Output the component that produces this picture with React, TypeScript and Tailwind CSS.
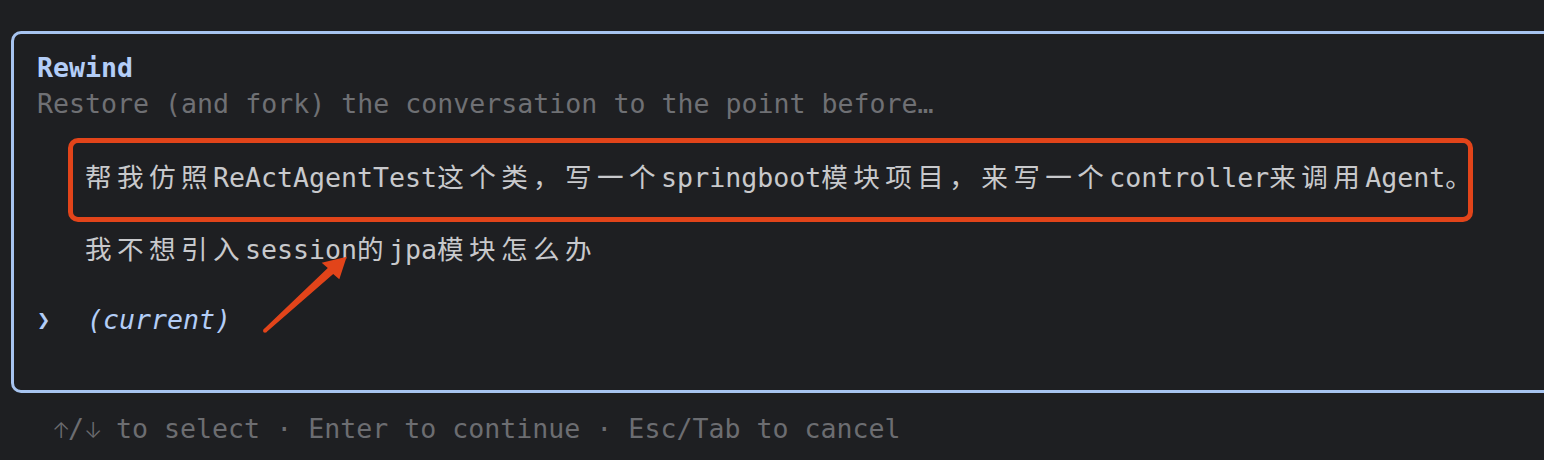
import React from "react";

const CJK = /([\u3000-\u303f\u4e00-\u9fff\uff00-\uffef]+)/;

// terminal cells: latin = 1 cell (16px), CJK = 2 cells (32px)
function Cells({ text }: { text: string }) {
  const parts = text.split(CJK).filter((p) => p.length > 0);
  return (
    <>
      {parts.map((p, i) =>
        CJK.test(p) ? (
          <span
            key={i}
            className="font-['Noto_Sans_CJK_SC',sans-serif] tracking-[5.4px]"
          >
            {p}
          </span>
        ) : (
          <span key={i}>{p}</span>
        )
      )}
    </>
  );
}

function Line({
  children,
  className = "",
}: {
  children?: React.ReactNode;
  className?: string;
}) {
  return (
    <div className={`h-9 leading-9 whitespace-pre ${className}`}>{children}</div>
  );
}

function Arrow({ ch }: { ch: string }) {
  return (
    <span className="inline-block w-[16px] text-center font-['Inter',sans-serif] text-[22px] font-light">
      {ch}
    </span>
  );
}

export default function App() {
  return (
    <div className="relative w-[1544px] h-[460px] overflow-hidden bg-[#1e1f22] font-['DejaVu_Sans_Mono','Noto_Sans_CJK_SC',monospace] text-[26.6px]">
      <div className="pt-[31px] pl-[11px]">
        <div className="w-[1600px] rounded-[10px] border-[3px] border-[#a7c4f0] py-4 pl-[23px]">
          <Line className="font-bold text-[#b3cdf7]">Rewind</Line>
          <Line className="text-[#6f7074]">
            Restore (and fork) the conversation to the point before…
          </Line>
          <Line />
          <Line className="pl-[48px] text-[#c8c9cc]">
            <Cells text="帮我仿照ReActAgentTest这个类，写一个springboot模块项目，来写一个controller来调用Agent。" />
          </Line>
          <Line />
          <Line className="pl-[48px] text-[#c8c9cc]">
            <Cells text="我不想引入session的jpa模块怎么办" />
          </Line>
          <Line />
          <Line className="flex text-[#b3cdf7]">
            <span className="inline-block w-[50px] font-bold text-[22px]">❯</span>
            <span className="italic">(current)</span>
          </Line>
          <Line />
        </div>
        <div className="mt-[18px] pl-[41px] h-9 leading-9 whitespace-pre text-[#6c6d71]">
          <Arrow ch="↑" />/<Arrow ch="↓" /> to select · Enter to continue · Esc/Tab to cancel
        </div>
      </div>

      {/* annotation: red highlight box */}
      <div className="absolute left-[68px] top-[138px] w-[1405px] h-[84px] rounded-[10px] border-[5px] border-[#e2441a]" />

      {/* annotation: arrow */}
      <svg
        className="absolute left-0 top-0"
        width="1544"
        height="460"
        viewBox="0 0 1544 460"
      >
        <polygon
          fill="#e2441a"
          points="266.3,332.2 333.2,274 339.3,279.3 346.7,256.7 321.7,262.7 327.8,268 263.7,329.2"
        />
        <circle cx="265" cy="330.7" r="2" fill="#e2441a" />
      </svg>
    </div>
  );
}
